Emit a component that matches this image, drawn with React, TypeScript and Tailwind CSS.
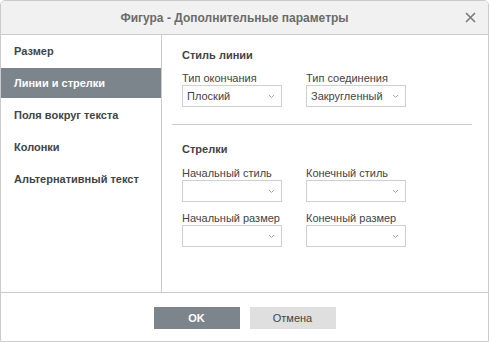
import React from "react";

const font = { fontFamily: '"Liberation Sans", Arial, sans-serif' };

function Caret() {
  return (
    <svg width="7" height="5" viewBox="0 0 7 5" className="shrink-0">
      <polyline points="1,1 3.5,3.5 6,1" fill="none" stroke="#a5a5a5" strokeWidth="1" />
    </svg>
  );
}

function Combo({ value }: { value?: string }) {
  return (
    <div className="h-[22px] w-[100px] border border-[#cfcfcf] bg-white flex items-center justify-between pl-[4px] pr-[6px]">
      <span className="text-[11px] text-[#444] leading-[13px]">{value ?? ""}</span>
      <Caret />
    </div>
  );
}

function Field({ label, value }: { label: string; value?: string }) {
  return (
    <div className="w-[100px] flex flex-col">
      <div className="text-[11px] leading-[13px] text-[#444] whitespace-nowrap">{label}</div>
      <Combo value={value} />
    </div>
  );
}

const items = ["Размер", "Линии и стрелки", "Поля вокруг текста", "Колонки", "Альтернативный текст"];

export default function App() {
  return (
    <div style={font} className="w-[489px] h-[342px] bg-white border border-[#cbcbcb] rounded-t-[5px] flex flex-col overflow-hidden">
      <div className="h-[34px] shrink-0 bg-[#f1f1f1] border-b border-[#cbcbcb] flex items-center justify-center pr-[20px] relative">
        <span className="text-[12px] font-bold text-[#6b6b6b]">Фигура - Дополнительные параметры</span>
        <svg className="absolute right-[12px] top-[11px]" width="11" height="11" viewBox="0 0 11 11">
          <path d="M1 1 L10 10 M10 1 L1 10" stroke="#7a7a7a" strokeWidth="1.6" />
        </svg>
      </div>
      <div className="h-[258px] shrink-0 flex border-b border-[#cbcbcb]">
        <div className="w-[161px] shrink-0 border-r border-[#cbcbcb] pt-[1px] flex flex-col gap-[2px]">
          {items.map((t, i) => (
            <div
              key={t}
              className={
                "h-[30px] flex items-center pl-[13px] text-[11px] font-bold whitespace-nowrap " +
                (i === 1 ? "bg-[#7d858c] text-white" : "text-[#444]")
              }
            >
              {t}
            </div>
          ))}
        </div>
        <div className="flex-1 flex flex-col">
          <div className="pt-[13px] pl-[20px]">
            <div className="text-[11px] font-bold leading-[14px] text-[#444]">Стиль линии</div>
            <div className="mt-[10px] flex gap-[24px]">
              <Field label="Тип окончания" value="Плоский" />
              <Field label="Тип соединения" value="Закругленный" />
            </div>
          </div>
          <div className="mt-[17px] ml-[10px] w-[300px] h-px bg-[#cbcbcb]" />
          <div className="pt-[17px] pl-[20px]">
            <div className="text-[11px] font-bold leading-[14px] text-[#444]">Стрелки</div>
            <div className="mt-[11px] flex gap-[24px]">
              <Field label="Начальный стиль" />
              <Field label="Конечный стиль" />
            </div>
            <div className="mt-[10px] flex gap-[24px]">
              <Field label="Начальный размер" />
              <Field label="Конечный размер" />
            </div>
          </div>
        </div>
      </div>
      <div className="flex-1 flex justify-center gap-[10px] pt-[14px]">
        <div className="w-[86px] h-[22px] bg-[#7d858c] text-white text-[11px] font-bold flex items-center justify-center">OK</div>
        <div className="w-[86px] h-[22px] bg-[#dfdfdf] text-[#444] text-[11px] flex items-center justify-center">Отмена</div>
      </div>
    </div>
  );
}
